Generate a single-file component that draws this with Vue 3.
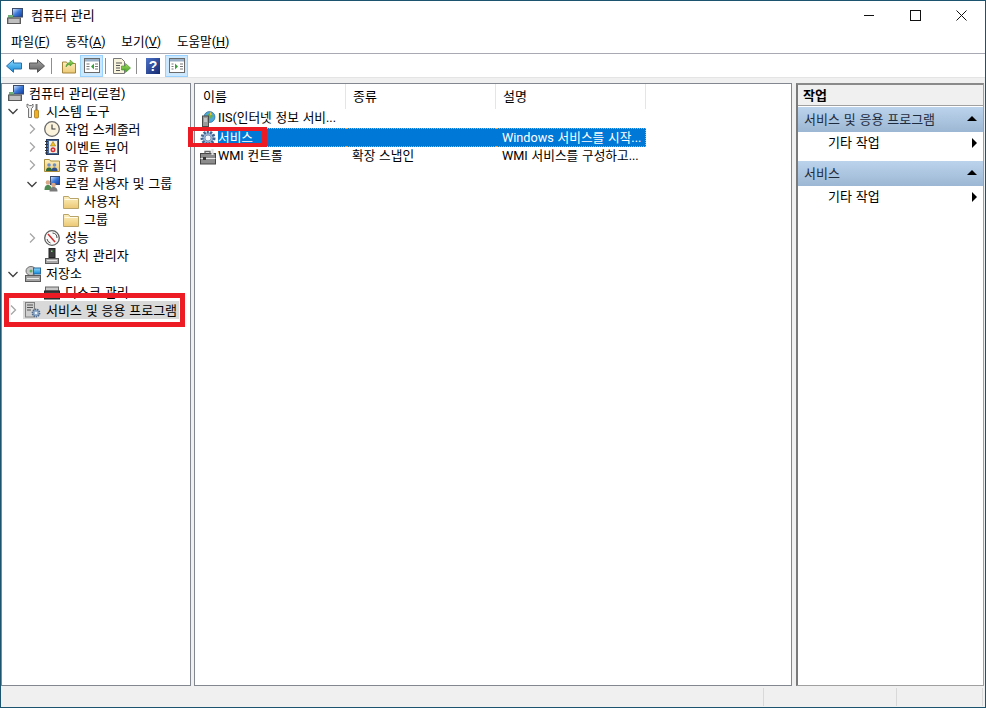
<script setup>
const menus = [
  ['파일(', 'F', ')'],
  ['동작(', 'A', ')'],
  ['보기(', 'V', ')'],
  ['도움말(', 'H', ')'],
]
const tree = [
  { lv: 0, icon: 'i-computer', text: '컴퓨터 관리(로컬)' },
  { lv: 1, arrow: 'down', icon: 'i-tools', text: '시스템 도구' },
  { lv: 2, arrow: 'right', icon: 'i-clock', text: '작업 스케줄러' },
  { lv: 2, arrow: 'right', icon: 'i-event', text: '이벤트 뷰어' },
  { lv: 2, arrow: 'right', icon: 'i-share', text: '공유 폴더' },
  { lv: 2, arrow: 'down', icon: 'i-users', text: '로컬 사용자 및 그룹' },
  { lv: 3, icon: 'i-folder', text: '사용자' },
  { lv: 3, icon: 'i-folder', text: '그룹' },
  { lv: 2, arrow: 'right', icon: 'i-perf', text: '성능' },
  { lv: 2, icon: 'i-device', text: '장치 관리자' },
  { lv: 1, arrow: 'down', icon: 'i-storage', text: '저장소' },
  { lv: 2, icon: 'i-disk', text: '디스크 관리' },
  { lv: 1, arrow: 'right', icon: 'i-apps', text: '서비스 및 응용 프로그램', sel: true },
]
const rows = [
  { icon: 'i-iis', name: 'IIS(인터넷 정보 서비...', type: '', desc: '' },
  { icon: 'i-gear', name: '서비스', type: '', desc: 'Windows 서비스를 시작...', sel: true },
  { icon: 'i-wmi', name: 'WMI 컨트롤', type: '확장 스냅인', desc: 'WMI 서비스를 구성하고...' },
]
const actions = ['서비스 및 응용 프로그램', '서비스']
</script>

<template>
  <div class="win">
    <svg class="sprite" width="0" height="0" aria-hidden="true">
      <defs>
        <linearGradient id="g-screen" x1="0" y1="0" x2="1" y2="1">
          <stop offset="0" stop-color="#dfeeff" /><stop offset=".5" stop-color="#3a78d8" /><stop offset="1" stop-color="#123a9a" />
        </linearGradient>
        <linearGradient id="g-folder" x1="0" y1="0" x2="0" y2="1">
          <stop offset="0" stop-color="#fdf0bf" /><stop offset="1" stop-color="#ecc874" />
        </linearGradient>
        <linearGradient id="g-blue" x1="0" y1="0" x2="0" y2="1">
          <stop offset="0" stop-color="#8fdcff" /><stop offset="1" stop-color="#0f86d8" />
        </linearGradient>
        <linearGradient id="g-gray" x1="0" y1="0" x2="0" y2="1">
          <stop offset="0" stop-color="#a8a8a8" /><stop offset="1" stop-color="#5c5c5c" />
        </linearGradient>
        <linearGradient id="g-help" x1="0" y1="0" x2="1" y2="1">
          <stop offset="0" stop-color="#4d72c8" /><stop offset="1" stop-color="#14296e" />
        </linearGradient>
        <linearGradient id="g-green" x1="0" y1="0" x2="0" y2="1">
          <stop offset="0" stop-color="#a8e060" /><stop offset="1" stop-color="#3f9a28" />
        </linearGradient>
      </defs>
      <symbol id="i-computer" viewBox="0 0 16 16">
        <rect x="5.5" y=".5" width="10" height="8.5" fill="url(#g-screen)" stroke="#3a4a6a" />
        <rect x="1" y="7" width="5" height="3" fill="#6fae78" />
        <rect x=".5" y="10" width="13" height="5.5" fill="#9a9a9a" stroke="#5a5a5a" />
        <path d="M2 12h10M2 14h10" stroke="#e4e4e4" />
      </symbol>
      <symbol id="i-tools" viewBox="0 0 16 16">
        <path d="M2 1v3l1.500 1.500v9h3v-9L8 4V1L6.500 2.500h-2z" fill="#ececec" stroke="#666" stroke-width=".9" />
        <rect x="10.500" y="1" width="2" height="6" fill="#777" />
        <rect x="9.500" y="7" width="4" height="8" rx="1" fill="#f0b020" stroke="#9a6a10" stroke-width=".7" />
      </symbol>
      <symbol id="i-clock" viewBox="0 0 16 16">
        <circle cx="8" cy="8" r="7.300" fill="#fbf3dc" stroke="#6a6a6a" stroke-width="1.300" />
        <path d="M8 3.500V8h3.500" fill="none" stroke="#3a3a3a" stroke-width="1.100" />
      </symbol>
      <symbol id="i-event" viewBox="0 0 16 16">
        <rect x="2.500" y=".5" width="12" height="15" fill="#4a6a9a" stroke="#26395e" />
        <rect x="5" y="2" width="8" height="12" fill="#f4f0e4" />
        <path d="M1 2.500h3M1 5.500h3M1 8.500h3M1 11.500h3M1 14h3" stroke="#333" />
        <path d="M9 2.500l2.600 4.500H6.400z" fill="#f2c020" stroke="#8a6a10" stroke-width=".5" />
        <circle cx="9" cy="10.800" r="2.500" fill="#d8343a" />
        <circle cx="9" cy="10.800" r=".9" fill="#fff" />
      </symbol>
      <symbol id="i-share" viewBox="0 0 16 16">
        <path d="M.5 14.500v-12h5l1 1.500h9v10.500z" fill="url(#g-folder)" stroke="#a88c3a" />
        <circle cx="5" cy="8" r="1.800" fill="#6e90c8" /><path d="M2 14c0-3 1.500-3.600 3-3.600S8 11 8 14z" fill="#2e6a3a" />
        <circle cx="10.500" cy="8" r="1.800" fill="#6e90c8" /><path d="M7.500 14c0-3 1.500-3.600 3-3.600s3 .6 3 3.600z" fill="#2e4e8a" />
      </symbol>
      <symbol id="i-users" viewBox="0 0 16 16">
        <rect x="6.500" y=".5" width="9" height="8" fill="url(#g-screen)" stroke="#3a4a6a" />
        <circle cx="4" cy="6.500" r="2.300" fill="#d8a888" />
        <path d="M.5 14c0-4 1.500-5 3.500-5s3.500 1 3.500 5z" fill="#4e8a52" />
        <circle cx="9.500" cy="9" r="2.300" fill="#d8a888" />
        <path d="M5.500 15.500c0-3.500 2-4.500 4-4.500s4 1 4 4.500z" fill="#7a7a7a" />
      </symbol>
      <symbol id="i-folder" viewBox="0 0 16 16">
        <path d="M.5 14.500V2.500h5l1.500 2h8.500v10z" fill="url(#g-folder)" stroke="#b8a468" />
        <path d="M1.500 5.500h13" stroke="#fffbe8" />
      </symbol>
      <symbol id="i-perf" viewBox="0 0 16 16">
        <circle cx="8" cy="8" r="7.300" fill="#fafafa" stroke="#5e5e5e" stroke-width="1.300" />
        <path d="M4 4l7 8" stroke="#d02c2c" stroke-width="1.500" />
        <path d="M8.500 3a5 5 0 0 1 4.500 5" fill="none" stroke="#4a4a4a" stroke-width="1" />
        <path d="M3 9a5 5 0 0 0 3.500 4" fill="none" stroke="#4a4a4a" stroke-width="1" />
      </symbol>
      <symbol id="i-device" viewBox="0 0 16 16">
        <rect x="5" y=".5" width="6" height="9" fill="#3c3c3c" stroke="#222" />
        <rect x="7" y="2.500" width="1.500" height="1.500" fill="#62d862" />
        <rect x="1.500" y="10.500" width="13" height="5" fill="#a8a8a8" stroke="#555" />
        <path d="M3 12.500h10" stroke="#e8e8e8" />
      </symbol>
      <symbol id="i-storage" viewBox="0 0 16 16">
        <ellipse cx="6" cy="5" rx="5" ry="4.500" fill="#c8c8c8" stroke="#707070" />
        <circle cx="6" cy="5" r="1.500" fill="#5fae62" />
        <rect x="8.500" y="2" width="7" height="6" fill="url(#g-blue)" stroke="#2a6a9a" />
        <rect x=".5" y="9.500" width="15" height="6" fill="#a4a4a4" stroke="#5a5a5a" />
        <path d="M2 12.500h12" stroke="#ededed" />
      </symbol>
      <symbol id="i-disk" viewBox="0 0 16 16">
        <rect x="1.500" y="3" width="13" height="4" fill="#c8c8c8" stroke="#666" />
        <rect x=".5" y="7" width="15" height="8" fill="#3c3c3c" stroke="#222" />
        <rect x="10" y="9" width="2" height="2" fill="#62d862" />
      </symbol>
      <symbol id="i-apps" viewBox="0 0 16 16">
        <rect x=".5" y=".5" width="9" height="14.500" fill="#cfcfcf" stroke="#808080" />
        <path d="M2 3h6M2 5.500h6M2 8h4" stroke="#555" />
        <circle cx="11" cy="11" r="3.600" fill="#8ca8c8" stroke="#4e6a8e" stroke-width="1.600" stroke-dasharray="1.400 .8" />
        <circle cx="11" cy="11" r="1.300" fill="#e8f0f8" />
      </symbol>
      <symbol id="i-gear" viewBox="0 0 16 16">
        <circle cx="8" cy="8" r="6" fill="#9cb6d4" stroke="#3f6492" stroke-width="3" stroke-dasharray="2 1.300" />
        <circle cx="8" cy="8" r="3" fill="#f4f7fb" stroke="#6a86aa" stroke-width=".8" />
      </symbol>
      <symbol id="i-iis" viewBox="0 0 16 16">
        <circle cx="9.500" cy="6" r="5.500" fill="#4aa8d8" stroke="#2a6a9a" stroke-width=".7" />
        <path d="M6 2c2 1 3 2 2 4S5 7 6 9s3 1 4-1 3-3 4-3" fill="#68b048" />
        <rect x="2.500" y="5" width="6" height="10.500" fill="#9a9a9a" stroke="#4a4a4a" />
        <path d="M4 8h3M4 10h3" stroke="#eee" />
        <path d="M10 .5l2 3-2 1z" fill="#e8c030" />
      </symbol>
      <symbol id="i-wmi" viewBox="0 0 16 16">
        <rect x=".5" y="4.500" width="15" height="10.500" fill="#8c8c8c" stroke="#444" />
        <path d="M.5 9.500h15" stroke="#e8e8e8" />
        <rect x="3" y="8" width="3" height="3" fill="#333" />
        <path d="M5 4.500V2.500h5v2" fill="none" stroke="#666" stroke-width="1.300" />
        <path d="M12.500 0v6" stroke="#e0e0e0" stroke-width="2.200" />
      </symbol>
    </svg>

    <header class="title">
      <svg class="ic"><use href="#i-computer" /></svg>
      <span class="title-text">컴퓨터 관리</span>
      <div class="controls">
        <svg width="46" height="29" viewBox="0 0 46 29"><path d="M18 14.500h10" stroke="#111" /></svg>
        <svg width="46" height="29" viewBox="0 0 46 29"><rect x="18.500" y="9.500" width="10" height="10" fill="none" stroke="#111" /></svg>
        <svg width="46" height="29" viewBox="0 0 46 29"><path d="M18.500 9.500l10 10M28.500 9.500l-10 10" stroke="#111" /></svg>
      </div>
    </header>

    <nav class="menu">
      <span v-for="m in menus" :key="m[1]" class="menu-item">{{ m[0] }}<u>{{ m[1] }}</u>{{ m[2] }}</span>
    </nav>

    <div class="toolbar">
      <svg class="tb-ic" viewBox="0 0 16 14"><path d="M.5 7L7.500 .7V4h8v6h-8v3.300z" fill="url(#g-blue)" stroke="#2a6fa8" /></svg>
      <svg class="tb-ic second" viewBox="0 0 16 14"><path d="M15.500 7L8.500 .7V4h-8v6h8v3.300z" fill="url(#g-gray)" stroke="#555" /></svg>
      <i class="sep"></i>
      <svg class="tb-ic up" viewBox="0 0 16 16">
        <path d="M1.500 15V4h4l1 1.500h8V15z" fill="url(#g-folder)" stroke="#a4843a" />
        <path d="M5 9c0-3 2-4.500 4-4.500V2l3.500 3L9 8V6.500C7 6.500 6 7.500 5 9z" fill="url(#g-green)" stroke="#3a8a28" stroke-width=".5" />
      </svg>
      <button class="tb-on">
        <svg width="16" height="15" viewBox="0 0 16 15">
          <rect x=".5" y=".5" width="15" height="14" fill="#fff" stroke="#6a6a6a" />
          <rect x="1" y="1" width="14" height="2.500" fill="#9ab0c8" />
          <path d="M2.500 6h3M2.500 8.500h3M2.500 11h3M11 6h3M11 8.500h3M11 11h3" stroke="#777" />
          <path d="M10 5.500v6l-3-3z" fill="#3aa03a" />
        </svg>
      </button>
      <i class="sep"></i>
      <svg class="tb-ic exp" viewBox="0 0 18 16">
        <path d="M.5 .5h8l3 3V15.500H.5z" fill="#f8f4dc" stroke="#777" />
        <path d="M3 5h6M3 7.500h4M3 10h4M3 12.500h4" stroke="#555" />
        <path d="M8.500 8h4V5.500L17.500 10l-5 4.500V12h-4z" fill="url(#g-green)" stroke="#3a8a28" stroke-width=".6" />
      </svg>
      <i class="sep"></i>
      <svg class="tb-ic help" viewBox="0 0 14 16">
        <rect width="14" height="16" fill="url(#g-help)" />
        <text x="7" y="13" text-anchor="middle" class="q">?</text>
      </svg>
      <button class="tb-on last">
        <svg width="16" height="15" viewBox="0 0 16 15">
          <rect x=".5" y=".5" width="15" height="14" fill="#fff" stroke="#6a6a6a" />
          <rect x="1" y="1" width="14" height="2.500" fill="#9ab0c8" />
          <path d="M2.500 6h2M2.500 8.500h2M2.500 11h2M11 6h3M11 8.500h3M11 11h3" stroke="#777" />
          <path d="M6 5.500v6l3-3z" fill="#3aa03a" />
        </svg>
      </button>
    </div>

    <main class="panes">
      <aside class="pane tree">
        <div v-for="(n, i) in tree" :key="i" class="t-row" :class="'lv' + n.lv">
          <span v-if="n.lv > 0" class="arrow">
            <svg v-if="n.arrow === 'right'" width="16" height="18" viewBox="0 0 16 18"><path d="M6 4.500l4.500 4.500L6 13.500" fill="none" stroke="#a6a6a6" stroke-width="1.300" /></svg>
            <svg v-if="n.arrow === 'down'" width="16" height="18" viewBox="0 0 16 18"><path d="M3.500 7l4.500 4.500L12.500 7" fill="none" stroke="#404040" stroke-width="1.300" /></svg>
          </span>
          <span class="t-node" :class="{ sel: n.sel }">
            <svg class="ic"><use :href="'#' + n.icon" /></svg>
            <span class="t-text">{{ n.text }}</span>
          </span>
        </div>
        <div class="mark mark-tree"></div>
      </aside>

      <section class="pane list">
        <div class="l-head">
          <span>이름</span><span>종류</span><span>설명</span>
        </div>
        <div v-for="r in rows" :key="r.name" class="l-row" :class="{ sel: r.sel }">
          <div class="c1">
            <svg class="ic"><use :href="'#' + r.icon" /></svg>
            <span class="c1-text">{{ r.name }}</span>
          </div>
          <div class="c">{{ r.type }}</div>
          <div class="c">{{ r.desc }}</div>
        </div>
        <div class="mark mark-list"></div>
      </section>

      <aside class="pane actions">
        <div class="a-title">작업</div>
        <template v-for="a in actions" :key="a">
          <div class="a-head">
            <span>{{ a }}</span>
            <i class="tri-up"></i>
          </div>
          <div class="a-item">
            <span>기타 작업</span>
            <i class="tri-right"></i>
          </div>
        </template>
      </aside>
    </main>

    <footer class="status">
      <span class="s1"></span><span class="s2"></span><span class="s3"></span>
    </footer>
  </div>
</template>

<style scoped>
.win {
  width: 986px;
  height: 708px;
  box-sizing: border-box;
  border: 1px solid #1c5470;
  display: flex;
  flex-direction: column;
  background: #f0f0f0;
  font-family: Roboto, "Noto Sans CJK KR", sans-serif;
  font-size: 13px;
  word-spacing: .6px;
  color: #000;
  overflow: hidden;
}
.sprite { flex: none; display: block; width: 0; height: 0; }
.ic { width: 16px; height: 16px; flex: none; display: block; }
.title {
  height: 29px;
  background: #fff;
  display: flex;
  align-items: center;
  padding-left: 6px;
  flex: none;
}
.title-text { margin-left: 8px; padding-bottom: 2px; }
.controls { margin-left: auto; display: flex; margin-right: 1px; }
.controls svg { display: block; }
.menu {
  height: 23px;
  box-sizing: content-box;
  background: #fff;
  border-bottom: 1px solid #a9a9b4;
  display: flex;
  align-items: center;
  padding-left: 10px;
  gap: 15.7px;
  flex: none;
  font-size: 12.6px;
  word-spacing: 0;
}
.menu-item { padding-bottom: 2px; }
.toolbar {
  height: 23px;
  background: #fff;
  border-bottom: 1px solid #e4e4e4;
  display: flex;
  align-items: center;
  flex: none;
}
.tb-ic { display: block; width: 16px; height: 14px; flex: none; }
.toolbar > .tb-ic:first-child { margin-left: 5px; }
.second { margin-left: 7px; }
.sep { width: 1px; height: 16px; background: #8e8e8e; flex: none; margin-left: 6px; }
.up { margin-left: 9px; height: 16px; }
.tb-on {
  width: 23px;
  height: 22px;
  box-sizing: border-box;
  padding: 0;
  margin: 0 0 0 3px;
  border: 1px solid #99d1ff;
  background: #cce8ff;
  display: flex;
  align-items: center;
  justify-content: center;
}
.tb-on + .sep { margin-left: 2px; }
.exp { margin-left: 7px; width: 18px; height: 16px; }
.exp + .sep { margin-left: 5px; }
.help { margin-left: 9px; width: 14px; height: 16px; }
.q { font: bold 14px "Liberation Sans", sans-serif; fill: #fff; }
.last { margin-left: 5px; }
.panes {
  flex: 1;
  min-height: 0;
  display: flex;
  padding: 5px 0 2px;
  background: #f0f0f0;
}
.pane {
  box-sizing: border-box;
  background: #fff;
  border: 1px solid #828790;
  position: relative;
  flex: none;
}
.tree { width: 190px; }
.t-row { height: 18.1px; display: flex; align-items: center; white-space: nowrap; }
.lv0 { padding-left: 4px; }
.lv1 { padding-left: 3px; }
.lv2 { padding-left: 22px; }
.lv3 { padding-left: 41px; }
.arrow { width: 16px; height: 18px; flex: none; display: block; }
.t-node { display: flex; align-items: center; height: 18px; margin-left: 2px; padding: 0 2px; }
.lv0 .t-node { margin-left: 0; }
.t-node.sel { background: #d9d9d9; }
.t-text { margin-left: 5px; padding-bottom: 2px; }
.list { width: 598px; margin-left: 3px; padding-left: 1px; }
.l-head {
  display: grid;
  grid-template-columns: 150px 150px 150px;
  height: 25px;
  width: 450px;
}
.l-head span {
  padding-left: 7px;
  border-right: 1px solid #e5e5e5;
  line-height: 25px;
  box-sizing: border-box;
}
.l-row {
  display: grid;
  grid-template-columns: 150px 150px 150px;
  width: 450px;
  height: 19px;
  line-height: 17px;
  white-space: nowrap;
  font-size: 12.7px;
}
.c1 { display: flex; align-items: center; padding-left: 4px; }
.c1-text { margin-left: 2px; flex: 1; height: 19px; box-sizing: border-box; }
.c { padding-left: 6px; overflow: hidden; }
.sel .c1-text, .sel .c {
  background: #0078d7;
  color: #fff;
  border-top: 1px dotted #f2a64a;
  border-bottom: 1px dotted #f2a64a;
}
.sel .c:last-child { border-right: 1px dotted #f2a64a; }
.actions { width: 188px; margin-left: 4px; border: 1px solid #a0a0a0; border-left: 2px solid #7a7a7a; border-top: 2px solid #8a8a8a; }
.a-title {
  height: 20px;
  line-height: 21px;
  font-weight: 700;
  padding-left: 5px;
  background: #f0f0f0;
  border-bottom: 1px solid #a0a0a0;
  margin-bottom: 1px;
}
.a-head {
  height: 25px;
  background: linear-gradient(#bcd3ec, #9cb7d3);
  display: flex;
  align-items: center;
  justify-content: space-between;
  padding: 0 5px 2px 6px;
  box-sizing: border-box;
  color: #1e2c40;
}
.a-item {
  height: 29px;
  display: flex;
  justify-content: space-between;
  padding: 2px 6px 0 30px;
  box-sizing: border-box;
  line-height: 18px;
}
.tri-up {
  width: 0; height: 0;
  border-left: 5px solid transparent;
  border-right: 5px solid transparent;
  border-bottom: 5px solid #000;
  margin-right: 1px;
}
.tri-right {
  width: 0; height: 0;
  margin-top: 4px;
  border-top: 5px solid transparent;
  border-bottom: 5px solid transparent;
  border-left: 5px solid #000;
}
.mark { position: absolute; border: 5px solid #ed1c24; box-sizing: border-box; pointer-events: none; }
.mark-tree { left: 2px; top: 209px; width: 181px; height: 34px; }
.mark-list { left: -7px; top: 43px; width: 79px; height: 20px; border-width: 4px 5px; }
.status {
  height: 18px;
  flex: none;
  display: flex;
  margin-bottom: 1px;
  margin-right: 1px;
}
.status span { border-right: 1px solid #d9d9d9; box-sizing: border-box; }
.s1 { width: 763px; }
.s2 { width: 133px; }
.s3 { width: 86px; }
</style>
